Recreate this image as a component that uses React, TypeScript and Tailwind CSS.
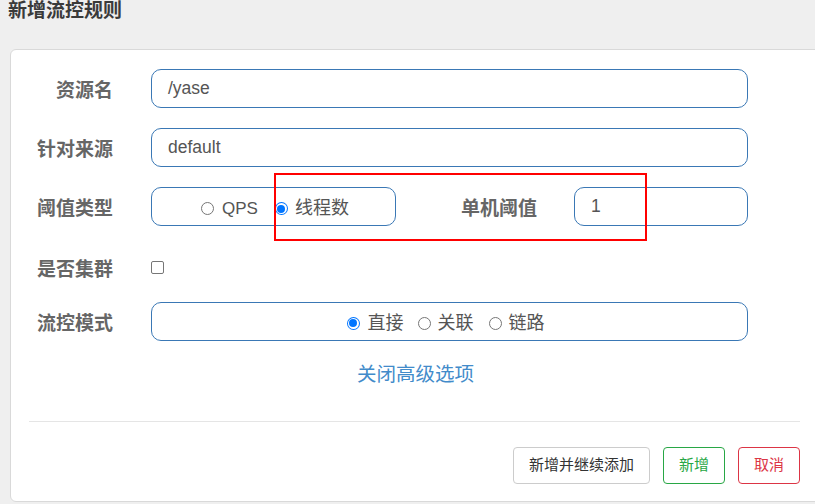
import React from "react";

const cjk = "font-['Liberation_Sans','Noto_Sans_CJK_SC',sans-serif]";

function Radio({ checked }: { checked?: boolean }) {
  return checked ? (
    <span className="flex h-[13px] w-[13px] items-center justify-center rounded-full bg-[#0075ff]">
      <span className="flex h-[11px] w-[11px] items-center justify-center rounded-full bg-white">
        <span className="h-[8px] w-[8px] rounded-full bg-[#0075ff]" />
      </span>
    </span>
  ) : (
    <span className="h-[13px] w-[13px] rounded-full border border-[#767676] bg-white" />
  );
}

function Label({ children, className = "w-[102px]" }: { children: React.ReactNode; className?: string }) {
  return (
    <div className={`${className} shrink-0 pt-[4px] text-right text-[19px] font-bold leading-none text-[#666]`}>
      {children}
    </div>
  );
}

export default function App() {
  return (
    <div className={`relative h-[504px] w-[815px] overflow-hidden bg-[#efefef] ${cjk}`}>
      <h4 className="pl-[8px] text-[19px] font-bold leading-[21px] text-[#3a3a3a]">新增流控规则</h4>

      <div className="ml-[10px] mt-[28px] h-[453px] w-[830px] rounded-[6px] border border-[#d9d9d9] bg-white pt-[19px]">
        <div className="w-[789px]">
          <div className="flex h-[39px] items-center">
            <Label>资源名</Label>
            <div className="ml-[38px] flex h-[39px] w-[597px] items-center rounded-[10px] border border-[#3a78b5] pl-[16px] text-[17.5px] text-[#555]">
              /yase
            </div>
          </div>

          <div className="mt-[20px] flex h-[39px] items-center">
            <Label>针对来源</Label>
            <div className="ml-[38px] flex h-[39px] w-[597px] items-center rounded-[10px] border border-[#3a78b5] pl-[16px] text-[17.5px] text-[#555]">
              default
            </div>
          </div>

          <div className="mt-[20px] flex h-[39px] items-center">
            <Label>阈值类型</Label>
            <div className="ml-[38px] flex h-[39px] w-[245px] items-center justify-center rounded-[10px] border border-[#3a78b5] pl-[3px] pt-[4px] text-[#555]">
              <span className="flex items-center gap-[8px] text-[17px]">
                <Radio />
                <span>QPS</span>
              </span>
              <span className="ml-[17px] flex items-center gap-[7px] text-[18px]">
                <Radio checked />
                <span>线程数</span>
              </span>
            </div>
            <Label className="w-[141px]">单机阈值</Label>
            <div className="ml-[37px] flex h-[39px] w-[174px] items-center rounded-[10px] border border-[#3a78b5] pl-[16px] text-[17.5px] text-[#555]">
              1
            </div>
          </div>

          <div className="mt-[20px] flex h-[42px] items-center">
            <Label>是否集群</Label>
            <span className="ml-[38px] h-[13px] w-[13px] rounded-[2px] border border-[#767676] bg-white" />
          </div>

          <div className="mt-[14px] flex h-[39px] items-center">
            <Label>流控模式</Label>
            <div className="ml-[38px] flex h-[39px] w-[597px] items-center justify-center rounded-[10px] border border-[#3a78b5] pr-[8px] pt-[3px] text-[18px] text-[#555]">
              <span className="flex items-center gap-[8px]">
                <Radio checked />
                <span>直接</span>
              </span>
              <span className="ml-[14px] flex items-center gap-[7px]">
                <Radio />
                <span>关联</span>
              </span>
              <span className="ml-[15px] flex items-center gap-[7px]">
                <Radio />
                <span>链路</span>
              </span>
            </div>
          </div>

          <div className="mt-[21px] pl-[346px] text-[19.5px] leading-[24px] text-[#428bca]">关闭高级选项</div>

          <div className="ml-[18px] mt-[35px] border-t border-[#e5e5e5]" />

          <div className="mt-[25px] flex justify-end gap-[13px] text-[15px]">
            <button className="h-[37px] w-[137px] rounded-[4px] border border-[#ccc] bg-white text-[#333]">
              新增并继续添加
            </button>
            <button className="h-[37px] w-[62px] rounded-[4px] border border-[#28a745] bg-white text-[#28a745]">
              新增
            </button>
            <button className="h-[37px] w-[62px] rounded-[4px] border border-[#dc3545] bg-white text-[#dc3545]">
              取消
            </button>
          </div>
        </div>
      </div>

      <div className="absolute left-[274px] top-[173px] h-[68px] w-[373px] border-2 border-[#ff0000]" />
    </div>
  );
}
